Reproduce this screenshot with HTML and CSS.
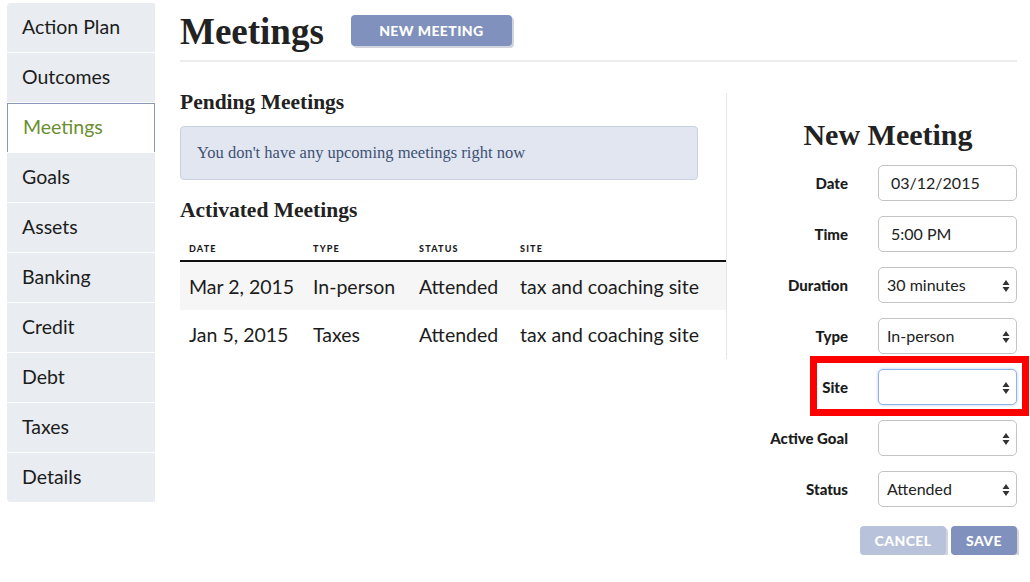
FILE: index.html
```html
<!DOCTYPE html>
<html lang="en">
<head>
    <meta charset="UTF-8">
    <title>Meetings</title>
    <link rel="stylesheet" href="styles.css">
</head>
<body>
    <nav class="sidebar">
        <a href="#" class="nav-item">Action Plan</a>
        <a href="#" class="nav-item">Outcomes</a>
        <a href="#" class="nav-item active">Meetings</a>
        <a href="#" class="nav-item">Goals</a>
        <a href="#" class="nav-item">Assets</a>
        <a href="#" class="nav-item">Banking</a>
        <a href="#" class="nav-item">Credit</a>
        <a href="#" class="nav-item">Debt</a>
        <a href="#" class="nav-item">Taxes</a>
        <a href="#" class="nav-item">Details</a>
    </nav>

    <main class="content">
        <header class="page-header">
            <h1>Meetings</h1>
            <a href="#" class="btn btn-header">New Meeting</a>
        </header>

        <div class="columns">
            <section class="meetings-list">
                <h3>Pending Meetings</h3>
                <div class="alert">You don't have any upcoming meetings right now</div>

                <h3>Activated Meetings</h3>
                <table>
                    <thead>
                        <tr>
                            <th class="col-date">Date</th>
                            <th class="col-type">Type</th>
                            <th class="col-status">Status</th>
                            <th>Site</th>
                        </tr>
                    </thead>
                    <tbody>
                        <tr>
                            <td>Mar 2, 2015</td>
                            <td>In-person</td>
                            <td>Attended</td>
                            <td>tax and coaching site</td>
                        </tr>
                        <tr>
                            <td>Jan 5, 2015</td>
                            <td>Taxes</td>
                            <td>Attended</td>
                            <td>tax and coaching site</td>
                        </tr>
                    </tbody>
                </table>
            </section>

            <section class="new-meeting">
                <h2>New Meeting</h2>
                <form class="meeting-form">
                    <div class="form-row">
                        <label>Date</label>
                        <div class="field">03/12/2015</div>
                    </div>
                    <div class="form-row">
                        <label>Time</label>
                        <div class="field">5:00 PM</div>
                    </div>
                    <div class="form-row">
                        <label>Duration</label>
                        <div class="field select">30 minutes
                            <svg class="arrows" width="8" height="14" viewBox="0 0 8 14"><path d="M4 1 L7.5 6 L0.5 6 Z M4 13 L7.5 8 L0.5 8 Z" fill="#333"/></svg>
                        </div>
                    </div>
                    <div class="form-row">
                        <label>Type</label>
                        <div class="field select">In-person
                            <svg class="arrows" width="8" height="14" viewBox="0 0 8 14"><path d="M4 1 L7.5 6 L0.5 6 Z M4 13 L7.5 8 L0.5 8 Z" fill="#333"/></svg>
                        </div>
                    </div>
                    <div class="form-row highlight">
                        <label>Site</label>
                        <div class="field select focus">
                            <svg class="arrows" width="8" height="14" viewBox="0 0 8 14"><path d="M4 1 L7.5 6 L0.5 6 Z M4 13 L7.5 8 L0.5 8 Z" fill="#333"/></svg>
                        </div>
                    </div>
                    <div class="form-row">
                        <label>Active Goal</label>
                        <div class="field select">
                            <svg class="arrows" width="8" height="14" viewBox="0 0 8 14"><path d="M4 1 L7.5 6 L0.5 6 Z M4 13 L7.5 8 L0.5 8 Z" fill="#333"/></svg>
                        </div>
                    </div>
                    <div class="form-row">
                        <label>Status</label>
                        <div class="field select">Attended
                            <svg class="arrows" width="8" height="14" viewBox="0 0 8 14"><path d="M4 1 L7.5 6 L0.5 6 Z M4 13 L7.5 8 L0.5 8 Z" fill="#333"/></svg>
                        </div>
                    </div>
                    <div class="form-actions">
                        <a href="#" class="btn btn-cancel">Cancel</a>
                        <a href="#" class="btn btn-save">Save</a>
                    </div>
                </form>
            </section>
        </div>
    </main>
</body>
</html>
```

FILE: styles.css
```css
body {
    font-family: Lato, "Noto Sans", sans-serif;
    margin: 0;
    padding: 3px 0 0 7px;
    background-color: #fff;
    color: #1c1c1c;
    display: flex;
    align-items: flex-start;
}
.sidebar {
    width: 148px;
    display: flex;
    flex-direction: column;
    gap: 1px;
    flex-shrink: 0;
}
.nav-item {
    display: block;
    box-sizing: border-box;
    height: 49px;
    line-height: 47px;
    padding-left: 15px;
    background-color: #e9ecf1;
    color: #1c1c1c;
    text-decoration: none;
    font-size: 19.5px;
}
.nav-item:first-child {
    border-top-left-radius: 4px;
}
.nav-item:last-child {
    border-bottom-left-radius: 4px;
}
.nav-item.active {
    background-color: #fff;
    color: #6b8e2f;
    border: 1px solid #8a98bc;
    border-bottom: none;
    line-height: 46px;
}
.content {
    margin-left: 25px;
    width: 837px;
}
.page-header {
    display: flex;
    align-items: center;
    height: 57px;
    border-bottom: 2px solid #ececec;
    margin-bottom: 28px;
}
.page-header h1 {
    margin: 0 27px 0 0;
    font-family: "Liberation Serif", serif;
    font-weight: bold;
    font-size: 37px;
    color: #222;
    line-height: 1;
}
.btn {
    display: inline-block;
    background-color: #7f91bc;
    color: white;
    text-decoration: none;
    text-transform: uppercase;
    font-weight: 900;
    font-size: 14px;
    letter-spacing: 0.4px;
    border-radius: 4px;
    text-align: center;
    box-shadow: 2px 2px 0 #d2d5dc;
}
.btn-header {
    width: 161px;
    height: 31px;
    line-height: 31px;
    margin-bottom: 2px;
}
.columns {
    display: flex;
    align-items: flex-start;
}
.meetings-list {
    width: 547px;
    border-right: 1px solid #e6e6e6;
    padding-bottom: 1px;
    margin-top: 3px;
}
.meetings-list h3 {
    font-family: "Liberation Serif", serif;
    font-weight: bold;
    font-size: 21.5px;
    color: #222;
    margin: 0 0 12px 0;
    line-height: 24px;
}
.meetings-list h3:first-child {
    margin-top: -3px;
}
.alert {
    width: 500px;
    height: 52px;
    line-height: 52px;
    padding-left: 16px;
    background-color: #e2e6f0;
    border: 1px solid #c9d1e1;
    border-radius: 4px;
    font-family: "Liberation Serif", serif;
    font-size: 16.5px;
    color: #3e5174;
    margin-bottom: 18px;
}
table {
    width: 100%;
    border-collapse: collapse;
    text-align: left;
    margin-top: 7px;
}
table th {
    font-size: 9px;
    font-weight: 900;
    letter-spacing: 1.2px;
    text-transform: uppercase;
    height: 23px;
    padding: 3px 0 0 9px;
    border-bottom: 2px solid #111;
    vertical-align: middle;
}
.col-date {
    width: 115px;
}
.col-type {
    width: 97px;
}
.col-status {
    width: 92px;
}
table td {
    font-size: 19.5px;
    height: 48px;
    padding: 0 0 0 9px;
    color: #1c1c1c;
}
tbody tr:first-child {
    background-color: #f6f6f6;
}
.new-meeting {
    width: 290px;
    padding-top: 28px;
}
.new-meeting h2 {
    font-family: "Liberation Serif", serif;
    font-weight: bold;
    font-size: 30px;
    color: #222;
    margin: 0 0 13px 0;
    text-align: center;
    padding-left: 32px;
    line-height: 34px;
}
.meeting-form {
    display: flex;
    flex-direction: column;
    gap: 15px;
}
.form-row {
    display: flex;
    align-items: center;
    position: relative;
}
.form-row label {
    width: 121px;
    text-align: right;
    font-weight: 900;
    font-size: 15px;
    margin-right: 30px;
}
.field {
    position: relative;
    box-sizing: border-box;
    width: 139px;
    height: 36px;
    line-height: 34px;
    border: 1px solid #c4c4c4;
    border-radius: 5px;
    padding-left: 12px;
    font-size: 16px;
    color: #222;
    background: #fff;
}
.field.select {
    padding-left: 8px;
}
.field.focus {
    border-color: #8fb5e6;
    box-shadow: 0 0 3px rgba(120, 165, 230, 0.6);
}
.arrows {
    position: absolute;
    right: 6px;
    top: 11px;
}
.highlight::before {
    content: "";
    position: absolute;
    left: 83px;
    top: -13px;
    width: 205px;
    height: 46px;
    border: 7px solid #ff0000;
}
.form-actions {
    display: flex;
    justify-content: flex-end;
    gap: 5px;
    margin-top: 4px;
}
.btn-cancel {
    width: 86px;
    height: 29px;
    line-height: 29px;
    background-color: #b8c2db;
}
.btn-save {
    width: 66px;
    height: 29px;
    line-height: 29px;
}
```
